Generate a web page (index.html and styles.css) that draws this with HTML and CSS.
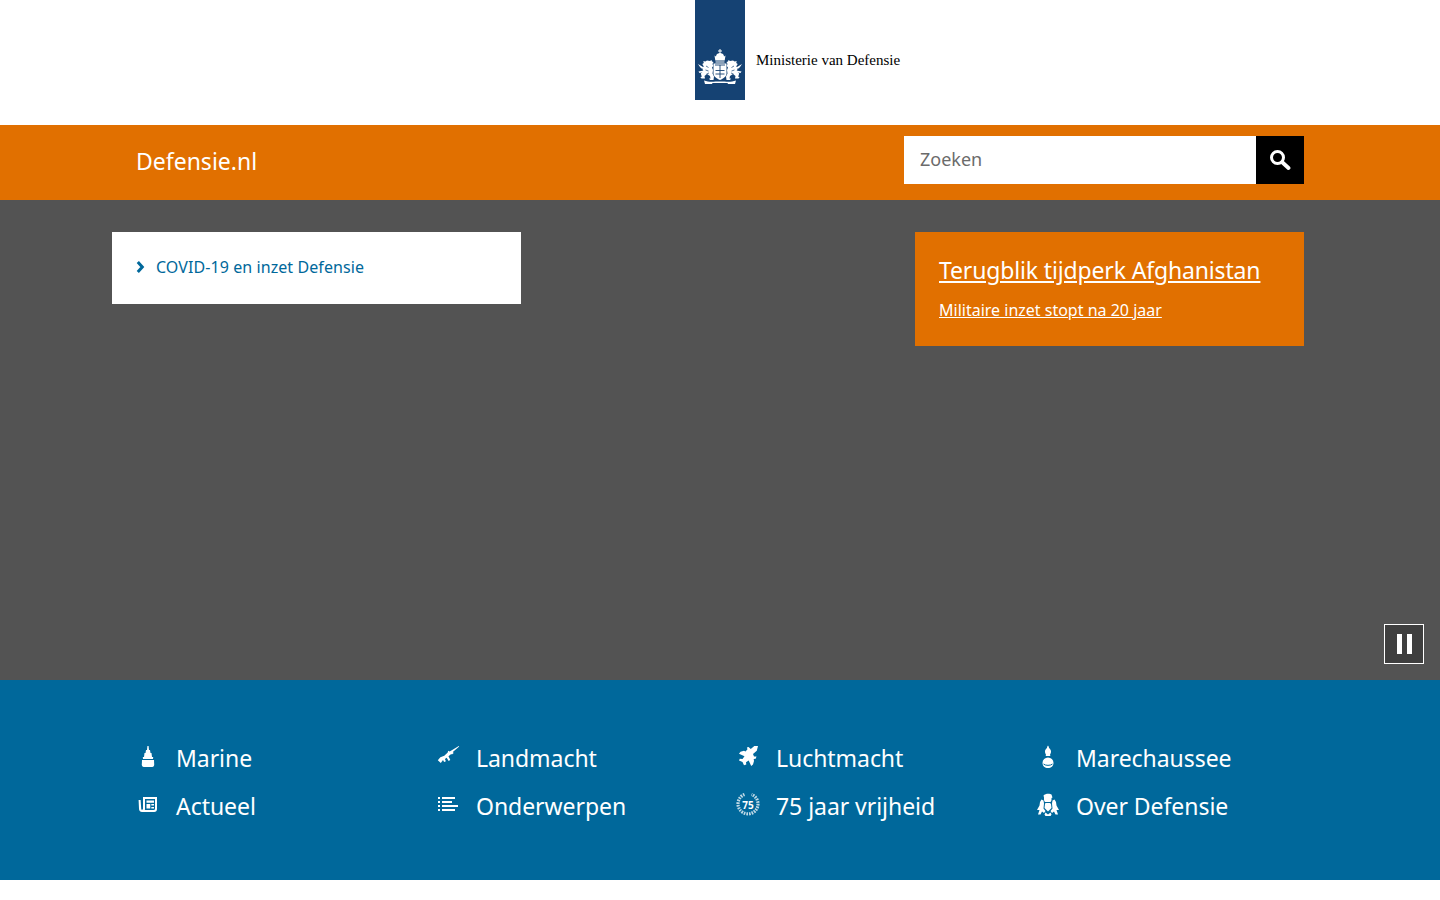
FILE: index.html
```html
<!DOCTYPE html>
<html lang="nl">
<head>
    <meta charset="UTF-8">
    <meta name="viewport" content="width=device-width, initial-scale=1.0">
    <title>Defensie.nl</title>
    <link rel="stylesheet" href="styles.css">
</head>
<body>
    <header class="logo-bar">
        <a class="logo" href="#">
            <span class="logo-blue">
                <svg class="crest" viewBox="0 0 50 45" fill="#fff">
                    <!-- crown -->
                    <path d="M24.500 4h1v1.500H27v1h-1.500V8c2 .3 3.500 1.500 3.500 3.500l1.500-1-.8 5H20.300l-.8-5 1.500 1c0-2 1.500-3.200 3.500-3.500V6.500H23v-1h1.500z"/>
                    <path d="M20.500 16.500h9v1h-9z"/>
                    <!-- shield -->
                    <path d="M18.500 18.500h13v10c0 2.800-3 5-6.500 6.500-3.500-1.500-6.500-3.700-6.500-6.500z"/>
                    <path d="M20 20h10M25 20v13M20.500 25.500h9M20.500 29h9" stroke="#154273" stroke-width=".9"/>
                    <g id="lion">
                        <!-- tail and tongue -->
                        <path d="M3 19l5 3 2-.5-.5 1.500-3 .5-1.500-1.500z"/>
                        <path d="M3.500 26.500l5-1 .5 1.500-4.500 1z"/>
                        <!-- head, mane, body -->
                        <path d="M12 15.500l3 .5 1.500-1 .5 1.500 1.500.5-1 2 .8 2-1.300 1.500 1 2.500-.5 3.500 1.500 3-.5 3.500h-3.500l-1-1.500h1.500l-.5-2.500-3-2-2.500 2 .5 2.500h-3.500l-1.200-1.500 1.500-.3-1-3.200 2.500-2.500-1-2.500 1.500-2-1.500-2.500 1.500-1-.5-2 2 .5z"/>
                        <path d="M11 21l2.500 1.500M10.500 25l3 1M11.500 29l2.500-1" stroke="#154273" stroke-width=".7"/>
                    </g>
                    <use href="#lion" transform="matrix(-1 0 0 1 50 0)"/>
                    <!-- ribbon -->
                    <path d="M9 35.500c5 1.800 9 1 16 1s11 .8 16-1l-1 3.500h-7l-.5-1h-15l-.5 1h-7z"/>
                </svg>
            </span>
            <span class="logo-text">Ministerie van Defensie</span>
        </a>
    </header>

    <div class="site-bar">
        <div class="wrap site-bar-in">
            <a class="site-name" href="#">Defensie.nl</a>
            <form class="search">
                <input class="search-input" type="text" placeholder="Zoeken">
                <button class="search-btn" type="button" aria-label="Zoeken">
                    <svg width="22" height="22" viewBox="0 0 22 22" fill="none" stroke="#fff">
                        <circle cx="8.500" cy="8.500" r="6" stroke-width="3"/>
                        <path d="M13.500 13.500l6 5.500" stroke-width="3.800" stroke-linecap="round"/>
                    </svg>
                </button>
            </form>
        </div>
    </div>

    <section class="hero">
        <div class="wrap hero-in">
            <div class="hero-links">
                <a class="hero-link" href="#">
                    <svg class="chev" width="9" height="12" viewBox="0 0 9 12" fill="none" stroke="#00689b" stroke-width="3">
                        <path d="M1.800 1l4.500 5-4.500 5"/>
                    </svg>
                    COVID-19 en inzet Defensie
                </a>
            </div>
            <div class="promo">
                <a class="promo-title" href="#">Terugblik tijdperk Afghanistan</a>
                <a class="promo-sub" href="#">Militaire inzet stopt na 20 jaar</a>
            </div>
        </div>
        <button class="pause" type="button" aria-label="Pauzeren">
            <span class="pause-bar"></span>
            <span class="pause-bar"></span>
        </button>
    </section>

    <nav class="org-nav">
        <ul class="org-grid">
            <li><a class="org-link" href="#">
                <span class="org-icon">
                    <svg width="24" height="24" viewBox="0 0 24 24" fill="#fff">
                        <path d="M11.400 1h1.200l.4 4h1l.5 3h1l.5 4h1.200l-.2 2H7l-.2-2H8l.5-4h1l.5-3h1z"/>
                        <path d="M6 15h12l.2 4.500c0 1.500-.7 2.500-2 2.500H7.800c-1.300 0-2-1-2-2.500z"/>
                    </svg>
                </span>Marine</a></li>
            <li><a class="org-link" href="#">
                <span class="org-icon">
                    <svg width="24" height="24" viewBox="0 0 24 24" fill="#fff">
                        <path d="M22.800 1l.4.500-6.400 5.600.9 1-1.800 1.300-.7-.5-2.700 2.400 1.800 3.700-1.700 1-1.900-3.200-1.800 1.100 1 2.300-1.800.9-1.100-2-2.200 2.900-3-2.700 2.600-3 3.900-1.500 3.400-3.300.5-1.700 1.500.8z"/>
                    </svg>
                </span>Landmacht</a></li>
            <li><a class="org-link" href="#">
                <span class="org-icon">
                    <svg width="24" height="24" viewBox="0 0 24 24" fill="#fff">
                        <path d="M22 1l-1.200 4.700-3.800 3.300 1 2.500h2.500l-.8 2.200-2 .3.300 2-1 3.500-1.800 1.500-2.500-5.500-2.700 1.700.3 2.300-2.300.7L6.500 17l-3.500-1.500.8-1.800 2.700.3 2-2.800-5.500-2.500 1.500-2 3.500-1 1.500.7 2-2.200-.6-1.700L12.500 2l2.300 2 3.500-3z"/>
                    </svg>
                </span>Luchtmacht</a></li>
            <li><a class="org-link" href="#">
                <span class="org-icon">
                    <svg width="24" height="24" viewBox="0 0 24 24" fill="#fff">
                        <path d="M12 .5c.8 1 1 1.800 1 2.500 1.300 1 2 2.300 2 3.500 0 1.300-.5 2.300-1 3 .5.500.5 1 0 1.500h-4c-.5-.5-.5-1 0-1.500-.5-.7-1-1.700-1-3 0-1.200.7-2.500 2-3.500 0-.7.2-1.500 1-2.500z"/>
                        <path d="M12 12.500a5.500 5.500 0 0 1 5.500 5.500c0 3-2.500 5-5.500 5s-5.500-2-5.500-5a5.500 5.500 0 0 1 5.500-5.500z"/>
                        <path d="M7.500 19c1.500 1.800 7.500 1.800 9 0" fill="none" stroke="#00689b" stroke-width="1"/>
                    </svg>
                </span>Marechaussee</a></li>
            <li><a class="org-link" href="#">
                <span class="org-icon">
                    <svg width="24" height="24" viewBox="0 0 24 24">
                        <path fill="#fff" fill-rule="evenodd" d="M7 4h14v12c0 1.700-1 3-2.800 3H6c-2 0-3-1.500-3-3.500L2.600 7h2l.6 8.500c0 .8.300 1.300.8 1.300s1-.5 1-1.300zm2 2v10c0 .5 0 .8-.2 1h9.200c.7 0 1-.5 1-1.200V6z"/>
                        <path fill="#fff" d="M10.500 7.500h7.500v2.200h-7.500zM10.500 11h3.800v4.500h-3.800zM15.300 11H18v1.500h-2.700zM15.300 14H18v1.500h-2.700z"/>
                    </svg>
                </span>Actueel</a></li>
            <li><a class="org-link" href="#">
                <span class="org-icon">
                    <svg width="24" height="24" viewBox="0 0 24 24" fill="#fff">
                        <path d="M2 4h2v2H2zM6 4h13v2H6zM2 8h2v2H2zM6 8h10v2H6zM2 12h2v2H2zM6 12h16v2H6zM2 16h2v2H2zM6 16h13v2H6z"/>
                    </svg>
                </span>Onderwerpen</a></li>
            <li><a class="org-link" href="#">
                <span class="org-icon">
                    <svg width="24" height="24" viewBox="0 0 24 24" fill="none" stroke="#fff">
                        <path class="wreath" d="M8.500 1.500A10 10 0 1 0 15.500 1.500" stroke-width="3.200" stroke-dasharray="1.600 1"/>
                        <text class="badge-num" x="12" y="15.500" text-anchor="middle">75</text>
                    </svg>
                </span>75 jaar vrijheid</a></li>
            <li><a class="org-link" href="#">
                <span class="org-icon">
                    <svg width="24" height="24" viewBox="0 0 24 24" fill="#fff">
                        <path d="M7.500 2.500C9 .5 14 .5 15.500 1.500l1 3-1 .5v1.500c0 1-.5 2-1 2.500H9C8.500 8.500 8 7.500 8 6.500V4.500z" fill-rule="evenodd"/>
                        <path d="M9.500 10h4.500l1 1 .5 4-3.500 3.500L8.500 15l.5-4z"/>
                        <path d="M5.500 6.500l2 1 .5 3-.5 5 2 2.500-1.500 2-2-1.500-1.500 3H2l1.500-4.500L1 17l2.500-4.500.5-3.500z"/>
                        <path d="M18.500 6.500l-2 1-.5 3 .5 5-2 2.500 1.500 2 2-1.500 1.500 3H22l-1.500-4.500L23 17l-2.500-4.500-.5-3.500z"/>
                        <path d="M9.500 19.500l2.500 2 2.500-2 1 2-1 1.500H9.500l-1-1.500z"/>
                    </svg>
                </span>Over Defensie</a></li>
        </ul>
    </nav>
</body>
</html>
```

FILE: styles.css
```css
body {
    margin: 0;
    background-color: white;
    color: white;
    font-family: "Noto Sans", sans-serif;
}

a {
    color: inherit;
}

.wrap {
    width: 1216px;
    margin: 0 auto;
    box-sizing: border-box;
    padding-right: 24px;
}

/* logo */
.logo-bar {
    height: 125px;
}

.logo {
    display: flex;
    margin-left: 695px;
    text-decoration: none;
}

.logo-blue {
    display: block;
    width: 50px;
    height: 100px;
    background-color: #154273;
}

.crest {
    display: block;
    width: 50px;
    height: 45px;
    margin-top: 45px;
}

.logo-text {
    margin: 50px 0 0 11px;
    color: black;
    font-family: "Liberation Serif", serif;
    font-size: 15px;
    line-height: 20px;
}

/* orange bar */
.site-bar {
    height: 75px;
    background-color: #e17000;
}

.site-bar-in {
    display: flex;
    justify-content: space-between;
    padding-top: 11px;
}

.site-name {
    margin: 7px 0 0 24px;
    font-size: 23px;
    line-height: 36px;
    text-decoration: none;
}

.search {
    display: flex;
    width: 400px;
    height: 48px;
}

.search-input {
    flex: 1;
    min-width: 0;
    border: none;
    padding: 0 16px 2px;
    font-family: "Noto Sans", sans-serif;
    font-size: 18px;
    outline: none;
}

.search-input::placeholder {
    color: #6b6b6b;
    opacity: 1;
}

.search-btn {
    width: 48px;
    padding: 0;
    border: none;
    background-color: black;
}

.search-btn svg {
    display: block;
    margin: 0 auto;
}

/* hero */
.hero {
    position: relative;
    height: 480px;
    background-color: #535353;
}

.hero-in {
    display: flex;
    justify-content: space-between;
    align-items: flex-start;
    padding-top: 32px;
}

.hero-links {
    width: 409px;
    height: 72px;
    box-sizing: border-box;
    padding: 22px 24px;
    background-color: white;
}

.hero-link {
    display: flex;
    align-items: center;
    color: #00689b;
    font-size: 16px;
    letter-spacing: .08px;
    line-height: 26px;
    text-decoration: none;
}

.chev {
    margin-right: 11px;
}

.promo {
    width: 389px;
    height: 114px;
    box-sizing: border-box;
    padding: 21px 24px;
    background-color: #e17000;
}

.promo-title {
    display: block;
    font-size: 23px;
    letter-spacing: -.15px;
    line-height: 34px;
}

.promo-sub {
    display: block;
    margin-top: 10px;
    font-size: 16px;
    line-height: 26px;
}

.pause {
    position: absolute;
    right: 16px;
    bottom: 16px;
    display: flex;
    justify-content: center;
    align-items: center;
    gap: 5px;
    width: 40px;
    height: 40px;
    padding: 0;
    border: 1px solid white;
    background-color: #3f3f3f;
}

.pause-bar {
    width: 5px;
    height: 20px;
    background-color: white;
}

/* blue nav */
.org-nav {
    height: 200px;
    background-color: #00689b;
}

.org-grid {
    display: grid;
    grid-template-columns: repeat(4, 300px);
    grid-auto-rows: 48px;
    margin: 0;
    padding: 54px 0 0 136px;
    list-style: none;
}

.org-link {
    display: flex;
    align-items: center;
    font-size: 23px;
    letter-spacing: -.05px;
    line-height: 48px;
    text-decoration: none;
}

.org-icon {
    display: flex;
    width: 24px;
    height: 24px;
    margin-right: 16px;
    margin-top: -2px;
}

.wreath {
    opacity: .75;
}

.badge-num {
    fill: white;
    stroke: none;
    font-family: "Noto Sans", sans-serif;
    font-size: 10px;
    font-weight: bold;
}
```
